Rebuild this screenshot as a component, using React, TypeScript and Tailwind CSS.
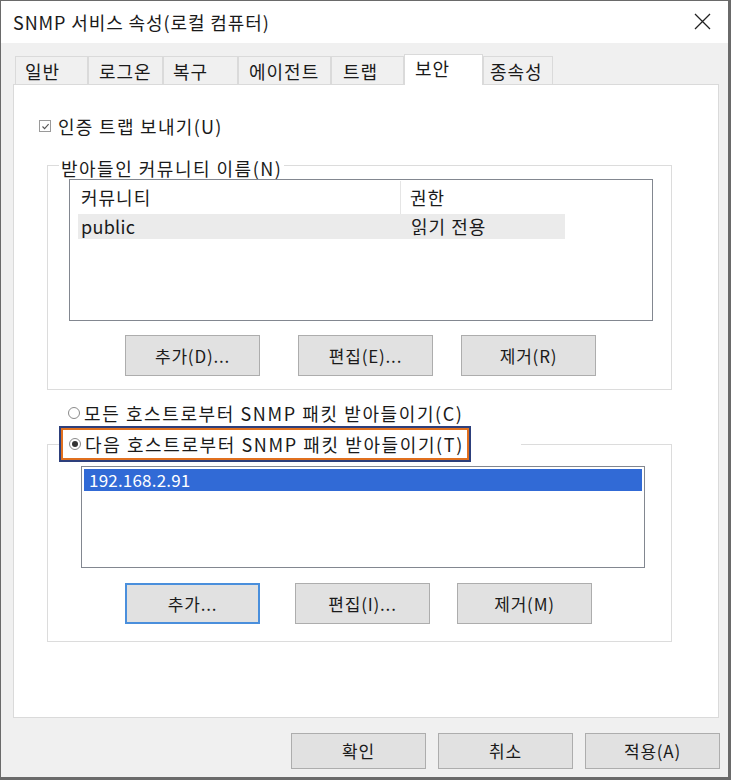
import React from 'react';

const tabs = [
  { label: '일반', w: 'w-[73px]', pl: 'pl-[9px]' },
  { label: '로그온', w: 'w-[75px]', pl: 'pl-[10px]' },
  { label: '복구', w: 'w-[75px]', pl: 'pl-[9px]' },
  { label: '에이전트', w: 'w-[93px]', pl: 'pl-[10px]' },
  { label: '트랩', w: 'w-[73px]', pl: 'pl-[11px]' },
  { label: '보안', w: 'w-[79px]', pl: 'pl-[10px]', active: true },
  { label: '종속성', w: 'w-[70px]', pl: 'pl-[6px]' },
];

const Button = ({ label, className = '', focused = false }: { label: string; className?: string; focused?: boolean }) => (
  <button
    className={`w-[135px] flex items-center justify-center bg-[#e1e1e1] text-[17px] tracking-[0.8px] text-[#1a1a1a] ${
      focused ? 'border-2 border-[#4a8fdc]' : 'border border-[#adadad]'
    } ${className}`}
  >
    {label}
  </button>
);

const Radio = ({ checked = false }: { checked?: boolean }) => (
  <span className="w-[12px] h-[12px] rounded-full border border-[#8a8a8a] bg-white flex items-center justify-center shrink-0">
    {checked && <span className="w-[6px] h-[6px] rounded-full bg-[#333]" />}
  </span>
);

export default function App() {
  return (
    <div className="w-[731px] h-[780px] bg-[#f0f0f0] border-t border-l border-r-[3px] border-b-[3px] border-[#6a6a6a] flex flex-col font-['Noto_Sans_CJK_KR',sans-serif] text-[#1a1a1a] text-[18px] tracking-[1.3px] overflow-hidden">
      {/* title bar */}
      <div className="h-[42px] bg-white flex items-center justify-between pl-[12px] pr-[17px] shrink-0">
        <span className="text-[18px] tracking-[0.9px]">SNMP 서비스 속성(로컬 컴퓨터)</span>
        <svg width="17" height="17" viewBox="0 0 17 17" className="mb-[1px]">
          <path d="M1 1 L16 16 M16 1 L1 16" stroke="#222" strokeWidth="1.3" fill="none" />
        </svg>
      </div>

      <div className="flex-1 flex flex-col pt-[11px] pl-[12px] pr-[10px]">
        {/* tabs */}
        <div className="flex items-end pl-[2px] h-[30px] relative z-10 tracking-[1px]">
          {tabs.map((t) =>
            t.active ? (
              <div
                key={t.label}
                className={`${t.w} ${t.pl} h-[31px] mb-[-1px] bg-white border border-b-0 border-[#dadada] flex items-center pb-[4px]`}
              >
                {t.label}
              </div>
            ) : (
              <div
                key={t.label}
                className={`${t.w} ${t.pl} h-[28px] bg-[#f0f0f0] border border-b-0 border-[#dadada] flex items-center pt-[1px]`}
              >
                {t.label}
              </div>
            )
          )}
        </div>

        {/* panel */}
        <div className="w-[706px] h-[634px] bg-white border border-[#dadada] flex flex-col">
          <div className="flex items-center mt-[31px] ml-[25px] h-[20px]">
            <span className="w-[12px] h-[12px] border border-[#9a9a9a] flex items-center justify-center">
              <svg width="9" height="9" viewBox="0 0 9 9">
                <path d="M1.5 4.5 L3.6 6.6 L7.6 2.2" stroke="#555" strokeWidth="1.1" fill="none" />
              </svg>
            </span>
            <span className="ml-[7px]">인증 트랩 보내기(U)</span>
          </div>

          {/* community group */}
          <fieldset className="ml-[33px] mt-[16px] w-[625px] border border-[#dcdcdc] pb-[13px]">
            <legend className="ml-[11px] px-[2px] leading-[20px] pt-[6px] tracking-[1.5px]">받아들인 커뮤니티 이름(N)</legend>
            <div className="ml-[21px] mt-[1px] w-[584px] h-[142px] border border-[#828790] pl-[8px] pt-[1px] tracking-[1px]">
              <div className="flex h-[33px]">
                <div className="w-[323px] flex items-center pl-[3px] border-r border-[#e5e5e5]">커뮤니티</div>
                <div className="w-[164px] flex items-center pl-[9px]">권한</div>
              </div>
              <div className="flex h-[25px] w-[487px] bg-[#ebebeb]">
                <div className="w-[323px] flex items-center pl-[3px] tracking-[0.3px]">public</div>
                <div className="w-[164px] flex items-center pl-[10px]">읽기 전용</div>
              </div>
            </div>
            <div className="flex h-[41px] mt-[14px]">
              <Button label="추가(D)..." className="ml-[77px]" />
              <Button label="편집(E)..." className="ml-[38px]" />
              <Button label="제거(R)" className="ml-[28px]" />
            </div>
          </fieldset>

          <div className="flex items-center ml-[54px] mt-[13px] h-[20px] tracking-[1.6px]">
            <Radio />
            <span className="ml-[4px]">모든 호스트로부터 SNMP 패킷 받아들이기(C)</span>
          </div>

          {/* host group */}
          <fieldset className="ml-[33px] mt-[3px] w-[625px] border border-[#dcdcdc] pb-[17px]">
            <legend className="ml-[11px] w-[462px]">
              <div className="w-[412px] h-[36px] border-2 border-[#2d3f7c]">
                <div className="w-full h-full border-2 border-[#e0701f] flex items-center pl-[6px] tracking-[1.6px]">
                  <Radio checked />
                  <span className="ml-[4px]">다음 호스트로부터 SNMP 패킷 받아들이기(T)</span>
                </div>
              </div>
            </legend>
            <div className="ml-[33px] mt-[4px] w-[564px] h-[102px] border border-[#828790] p-[2px] tracking-[0.2px]">
              <div className="h-[22px] bg-[#316ad6] text-white text-[17px] flex items-center pl-[5px]">192.168.2.91</div>
            </div>
            <div className="flex h-[41px] mt-[15px]">
              <Button label="추가..." className="ml-[77px]" focused />
              <Button label="편집(I)..." className="ml-[35px]" />
              <Button label="제거(M)" className="ml-[27px]" />
            </div>
          </fieldset>
        </div>

        {/* dialog buttons */}
        <div className="flex justify-end mt-[15px] h-[36px] gap-[12px] -mr-[2px]">
          <Button label="확인" />
          <Button label="취소" />
          <Button label="적용(A)" />
        </div>
      </div>
    </div>
  );
}
